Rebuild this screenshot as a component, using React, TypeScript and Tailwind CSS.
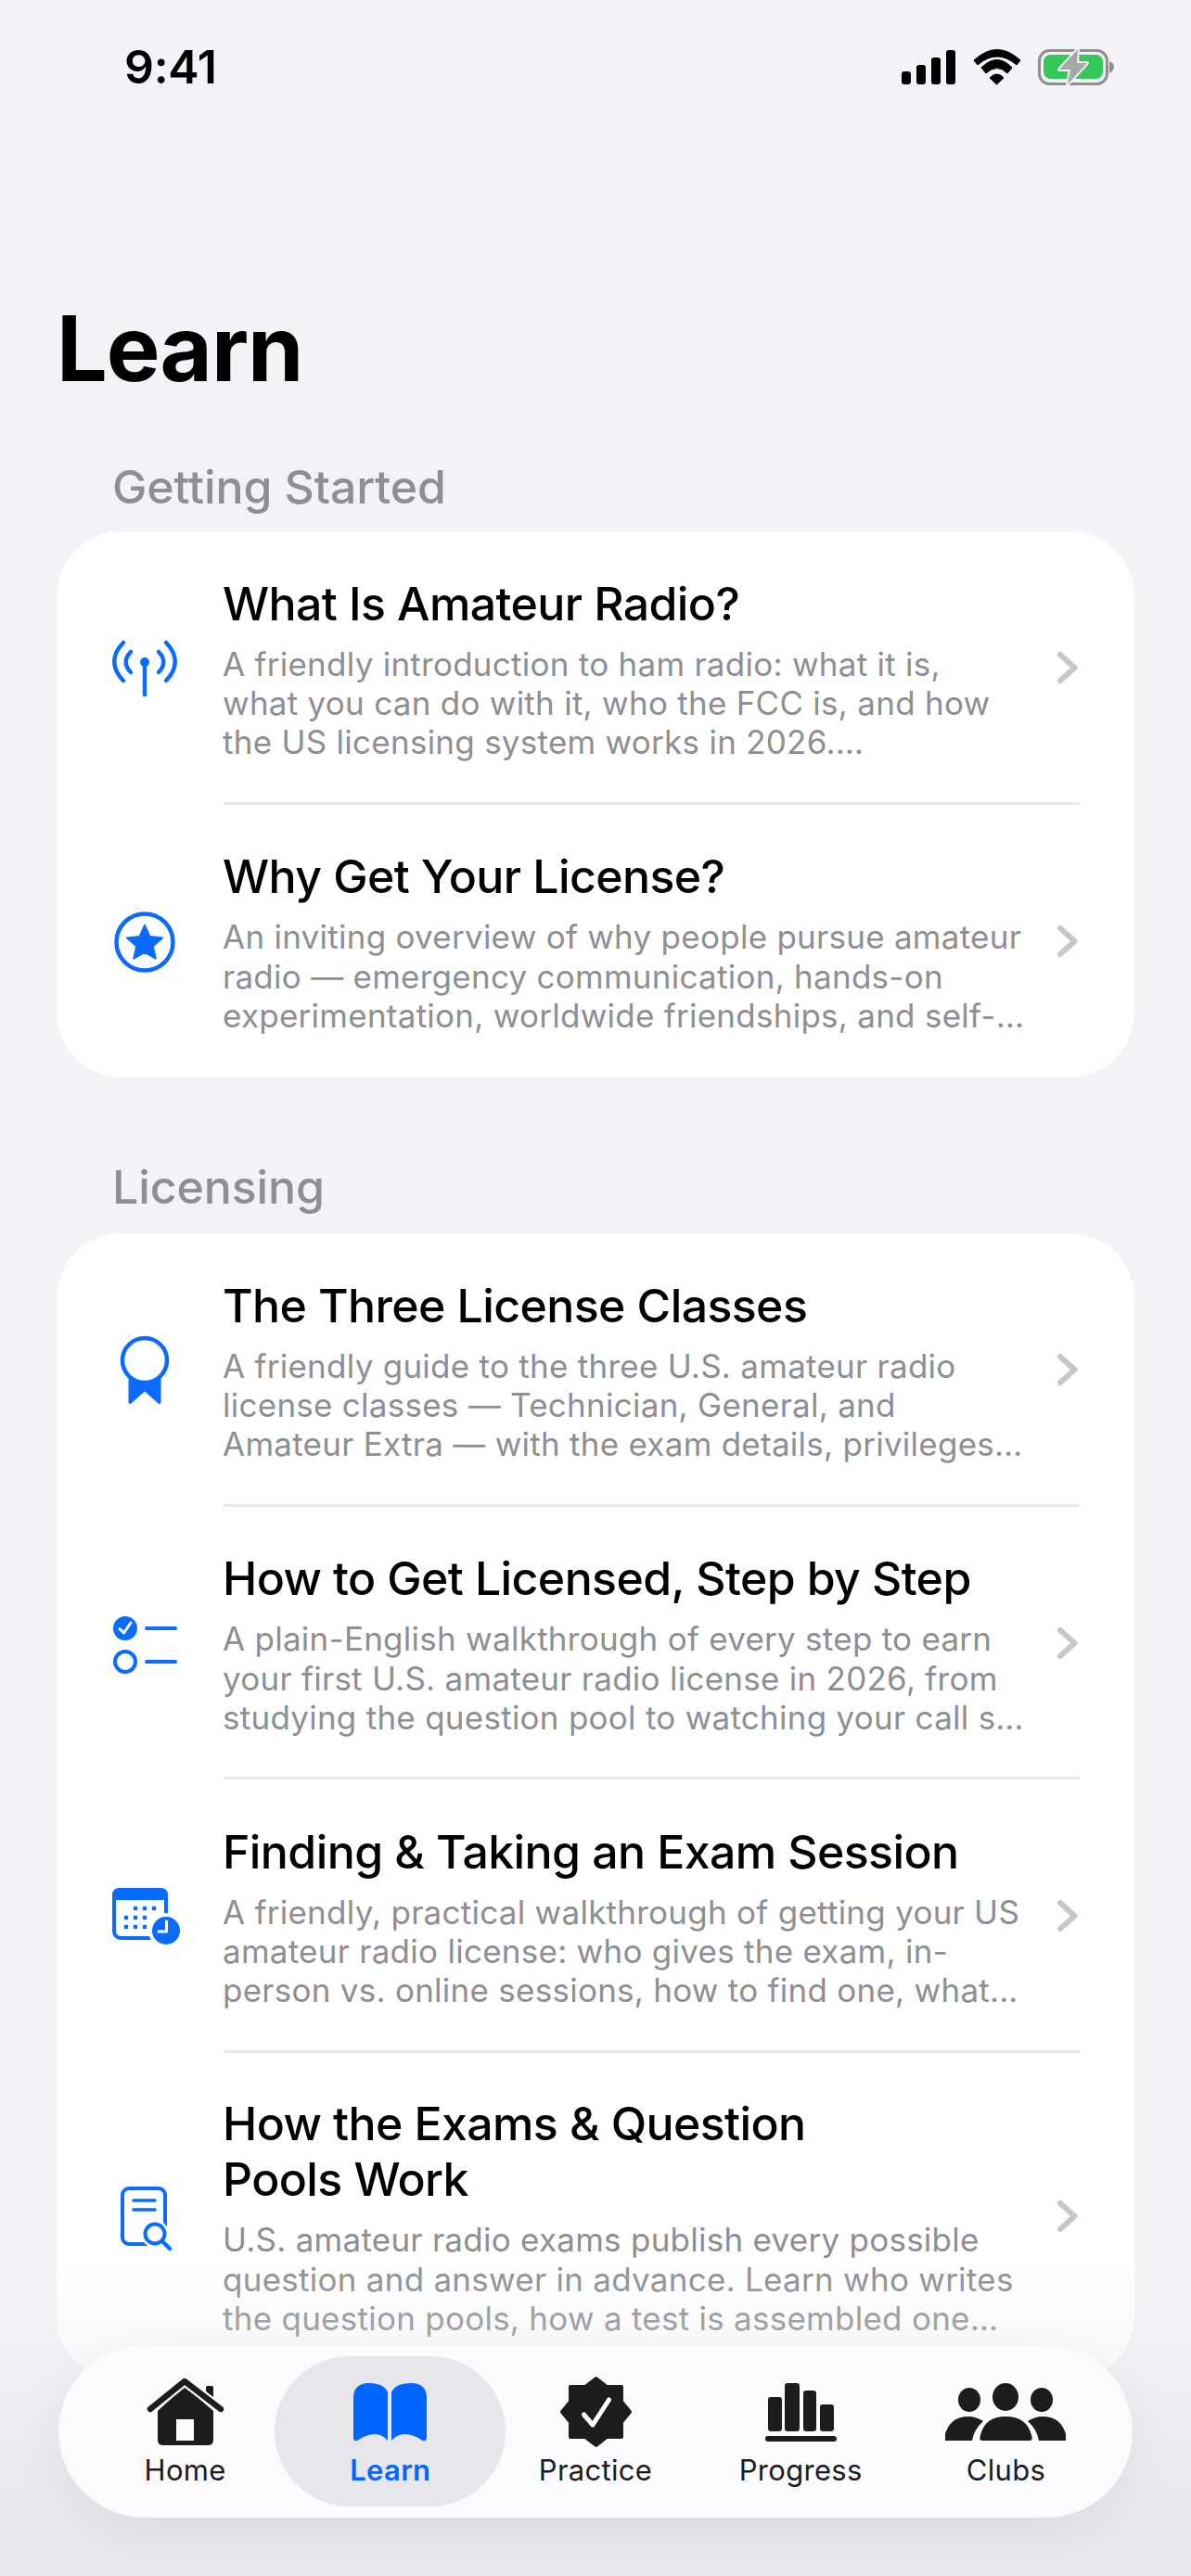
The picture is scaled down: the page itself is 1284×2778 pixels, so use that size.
import React from "react";

const BLUE = "#0a6cff";
const DARK = "#1c1c1e";

const Antenna = () => (
  <svg viewBox="116 680 80 80" className="w-20 h-20 shrink-0" fill="none" stroke={BLUE} strokeWidth="4.5" strokeLinecap="round">
    <path d="M133 693 C120 706 120 721 133 734" />
    <path d="M179 693 C192 706 192 721 179 734" />
    <path d="M141 703 C134 710 134 718 141 725" />
    <path d="M171 703 C178 710 178 718 171 725" />
    <path d="M156 714 V749" />
    <circle cx="156" cy="714" r="5" fill={BLUE} stroke="none" />
  </svg>
);

const StarCircle = () => (
  <svg viewBox="116 974 80 80" className="w-20 h-20 shrink-0">
    <circle cx="156" cy="1015" r="30.5" fill="none" stroke={BLUE} strokeWidth="4.5" />
    <path d="M156 997 L161.4 1009 L175 1010.4 L164.8 1019.4 L167.8 1032.6 L156 1025.8 L144.2 1032.6 L147.2 1019.4 L137 1010.4 L150.6 1009 Z" fill={BLUE} stroke={BLUE} strokeWidth="2" strokeLinejoin="round" />
  </svg>
);

const Ribbon = () => (
  <svg viewBox="116 1436 80 80" className="w-20 h-20 shrink-0">
    <path d="M138.5 1482 L173.5 1482 L173.5 1511 Q173.5 1514 170.5 1512.5 L156 1499.5 L141.5 1512.5 Q138.5 1514 138.5 1511 Z" fill={BLUE} />
    <circle cx="156" cy="1466" r="24" fill="#fff" stroke={BLUE} strokeWidth="4.5" />
  </svg>
);

const Checklist = () => (
  <svg viewBox="116 1730 80 80" className="w-20 h-20 shrink-0" fill="none" strokeLinecap="round">
    <circle cx="135" cy="1754" r="13" fill={BLUE} />
    <path d="M129 1754.5 L133.5 1759 L141 1748" stroke="#fff" strokeWidth="3" strokeLinejoin="round" />
    <circle cx="135" cy="1790" r="11" stroke={BLUE} strokeWidth="4" />
    <path d="M158 1754 H189 M158 1790 H189" stroke={BLUE} strokeWidth="4" />
  </svg>
);

const CalendarClock = () => (
  <svg viewBox="116 2025 80 80" className="w-20 h-20 shrink-0">
    <rect x="123" y="2037" width="56" height="52" rx="7" fill="none" stroke={BLUE} strokeWidth="4" />
    <path d="M121 2048 V2043 Q121 2035 129 2035 H173 Q181 2035 181 2043 V2048 Z" fill={BLUE} />
    {[
      [146, 2057], [156, 2057], [166, 2057],
      [136, 2067], [146, 2067], [156, 2067],
      [136, 2077], [146, 2077], [156, 2077],
    ].map(([x, y]) => (
      <rect key={`${x}-${y}`} x={x - 2.2} y={y - 2.2} width="4.4" height="4.4" rx="1.2" fill={BLUE} />
    ))}
    <circle cx="179" cy="2081" r="19" fill="#fff" />
    <circle cx="179" cy="2081" r="15" fill={BLUE} />
    <path d="M179.5 2071 V2082 H171" fill="none" stroke="#fff" strokeWidth="3" strokeLinecap="round" strokeLinejoin="round" />
  </svg>
);

const DocSearch = () => (
  <svg viewBox="116 2348 80 80" className="w-20 h-20 shrink-0" fill="none" stroke={BLUE} strokeLinecap="round">
    <rect x="132" y="2358" width="46" height="60" rx="7" strokeWidth="4" />
    <path d="M144 2371 H167 M144 2381 H167" strokeWidth="3.5" />
    <circle cx="167" cy="2407" r="15" fill="#fff" stroke="none" />
    <circle cx="167" cy="2407" r="10.5" strokeWidth="4" fill="#fff" />
    <path d="M175 2415 L183 2423" strokeWidth="4.5" />
  </svg>
);

const Chevron = () => (
  <svg viewBox="0 0 24 36" className="w-6 h-9 shrink-0" fill="none" stroke="#c7c7c9" strokeWidth="6" strokeLinecap="round" strokeLinejoin="round">
    <path d="M3 4 L18.5 18 L3 32" />
  </svg>
);

type Item = { icon: React.ReactNode; title: string[]; lines: string[]; last?: boolean };

const Row = ({ item, tall }: { item: Item; tall?: boolean }) => (
  <div className={`flex items-center pl-[55px] ${tall ? "h-[353px]" : "h-[294.5px]"}`}>
    {item.icon}
    <div className="ml-[44px] w-[924px] h-full flex items-center relative">
      <div className="flex-1 min-w-0 pt-[2px]">
        <div className="text-[50px] leading-[60px] font-[550] tracking-[-0.6px] text-black whitespace-nowrap">
          {item.title.map((t) => (
            <div key={t}>{t}</div>
          ))}
        </div>
        <div className="mt-[14px] text-[35px] leading-[42.4px] tracking-[0.26px] text-[#8e8e93] whitespace-nowrap">
          {item.lines.map((t) => (
            <div key={t}>{t}</div>
          ))}
        </div>
      </div>
      <Chevron />
      {!item.last && <div className="absolute left-[1px] right-0 bottom-0 h-[3px] bg-[#e8e8ea]" />}
    </div>
  </div>
);

const gettingStarted: Item[] = [
  {
    icon: <Antenna />,
    title: ["What Is Amateur Radio?"],
    lines: [
      "A friendly introduction to ham radio: what it is,",
      "what you can do with it, who the FCC is, and how",
      "the US licensing system works in 2026.…",
    ],
  },
  {
    icon: <StarCircle />,
    title: ["Why Get Your License?"],
    lines: [
      "An inviting overview of why people pursue amateur",
      "radio — emergency communication, hands-on",
      "experimentation, worldwide friendships, and self-…",
    ],
    last: true,
  },
];

const licensing: Item[] = [
  {
    icon: <Ribbon />,
    title: ["The Three License Classes"],
    lines: [
      "A friendly guide to the three U.S. amateur radio",
      "license classes — Technician, General, and",
      "Amateur Extra — with the exam details, privileges…",
    ],
  },
  {
    icon: <Checklist />,
    title: ["How to Get Licensed, Step by Step"],
    lines: [
      "A plain-English walkthrough of every step to earn",
      "your first U.S. amateur radio license in 2026, from",
      "studying the question pool to watching your call s…",
    ],
  },
  {
    icon: <CalendarClock />,
    title: ["Finding & Taking an Exam Session"],
    lines: [
      "A friendly, practical walkthrough of getting your US",
      "amateur radio license: who gives the exam, in-",
      "person vs. online sessions, how to find one, what…",
    ],
  },
  {
    icon: <DocSearch />,
    title: ["How the Exams & Question", "Pools Work"],
    lines: [
      "U.S. amateur radio exams publish every possible",
      "question and answer in advance. Learn who writes",
      "the question pools, how a test is assembled one…",
    ],
    last: true,
  },
];

const SectionLabel = ({ children }: { children: React.ReactNode }) => (
  <div className="pl-[121px] text-[50px] leading-[60px] font-[550] text-[#8e8e93] tracking-[-0.1px]">{children}</div>
);

const tabs = [
  {
    label: "Home",
    vb: "155 2562 90 80",
    svg: (
      <>
        <path d="M170 2600 L199 2573 L230 2600 V2631 Q230 2637 224 2637 H176 Q170 2637 170 2631 Z" fill={DARK} />
        <rect x="190" y="2609" width="19" height="23" fill="#fbfbfe" />
        <rect x="222" y="2573" width="8" height="20" rx="1.5" fill={DARK} />
        <path d="M162 2598 L199 2568 L238 2598" fill="none" stroke="#fbfbfe" strokeWidth="11" strokeLinecap="round" strokeLinejoin="round" />
        <path d="M162 2598 L199 2568 L238 2598" fill="none" stroke={DARK} strokeWidth="6.5" strokeLinecap="round" strokeLinejoin="round" />
      </>
    ),
  },
  {
    label: "Learn",
    vb: "375 2562 90 80",
    svg: (
      <>
        <path d="M380 2586 Q380 2570 397 2570 Q413 2570 417 2580 V2632 Q405 2618 384 2632 Q380 2633 380 2628 Z" fill="#0066ff" />
        <path d="M459 2586 Q459 2570 442 2570 Q425 2570 421 2580 V2632 Q433 2618 455 2632 Q459 2633 459 2628 Z" fill="#0066ff" />
      </>
    ),
  },
  {
    label: "Practice",
    vb: "597 2562 90 80",
    svg: (
      <>
        <path
          d="M642.7 2565 L654 2574 H670 V2590 L679 2601 L670 2612 V2628 H654 L642.7 2637 L631 2628 H615 V2612 L606 2601 L615 2590 V2574 H631 Z"
          fill={DARK}
          stroke={DARK}
          strokeWidth="4"
          strokeLinejoin="round"
        />
        <path d="M629.5 2604 L639 2615 L656.5 2588" fill="none" stroke="#fff" strokeWidth="5" strokeLinecap="round" strokeLinejoin="round" />
      </>
    ),
  },
  {
    label: "Progress",
    vb: "819 2562 90 80",
    svg: (
      <g fill={DARK}>
        <rect x="829" y="2585" width="15" height="37" rx="3" />
        <rect x="847" y="2570" width="16" height="52" rx="3" />
        <rect x="867" y="2578" width="14" height="44" rx="3" />
        <rect x="885" y="2593" width="15" height="29" rx="3" />
        <rect x="826" y="2627" width="77" height="6" rx="3" />
      </g>
    ),
  },
  {
    label: "Clubs",
    vb: "1019 2562 130 80",
    svg: (
      <g fill={DARK}>
        <ellipse cx="1084" cy="2585" rx="14" ry="15" />
        <ellipse cx="1045" cy="2588" rx="12" ry="13" />
        <ellipse cx="1123" cy="2588" rx="12" ry="13" />
        <path d="M1020 2632 Q1016 2632 1020 2622 Q1026 2606 1044 2606 Q1052 2606 1060 2611 Q1050 2620 1048 2632 Z" />
        <path d="M1148 2632 Q1152 2632 1148 2622 Q1142 2606 1124 2606 Q1116 2606 1108 2611 Q1118 2620 1120 2632 Z" />
        <path d="M1059 2632 Q1055 2632 1057 2626 Q1062 2606 1084 2606 Q1107 2606 1112 2626 Q1114 2632 1110 2632 Z" />
      </g>
    ),
  },
];

export default function App() {
  return (
    <div className="relative w-[1284px] h-[2778px] overflow-hidden bg-[#f2f2f7] font-['Inter',sans-serif]">
      <div className="flex items-center justify-between h-[144px] pl-[134px] pr-[80px]">
        <div className="text-[50px] font-semibold leading-none text-black tracking-[-0.3px]">9:41</div>
        <svg viewBox="970 50 235 44" className="w-[235px] h-[44px]">
          <rect x="973" y="77" width="10" height="14" rx="3" fill="#000" />
          <rect x="989" y="70" width="10" height="21" rx="3" fill="#000" />
          <rect x="1005" y="62" width="10" height="29" rx="3" fill="#000" />
          <rect x="1021" y="54" width="10" height="37" rx="3" fill="#000" />
          <path d="M1051 65 Q1076 42 1101 65 L1097 70 Q1076 52 1055 70 Z" fill="#000" stroke="#000" strokeWidth="1" strokeLinejoin="round" />
          <path d="M1059 73 Q1076 56 1092 73 L1087 79 Q1076 68 1064 79 Z" fill="#000" stroke="#000" strokeWidth="1" strokeLinejoin="round" />
          <path d="M1068 84 Q1076 76 1083 84 L1075.5 91 Z" fill="#000" stroke="#000" strokeWidth="1" strokeLinejoin="round" />
          <rect x="1121.5" y="54.5" width="73" height="36" rx="11" fill="none" stroke="#8e8e8e" strokeWidth="3" />
          <rect x="1126" y="59" width="64" height="26" rx="7.5" fill="#34c759" />
          <path d="M1197 66 Q1202 68 1202 72 Q1202 76 1197 79 Z" fill="#8e8e8e" />
          <path d="M1163 53 L1143 75 L1155 75 L1152 91 L1173 68 L1162 68 Z" fill="#a8a8a8" stroke="#f2f2f7" strokeWidth="4" strokeLinejoin="round" paintOrder="stroke" />
        </svg>
      </div>

      <h1 className="pl-[61px] mt-[182px] text-[97px] leading-[100px] font-bold text-black tracking-[-1px]">Learn</h1>

      <div className="mt-[69px]">
        <SectionLabel>Getting Started</SectionLabel>
      </div>
      <div className="mx-[61px] mt-[18px] bg-white rounded-[70px]">
        {gettingStarted.map((it) => (
          <Row key={it.title[0]} item={it} />
        ))}
      </div>

      <div className="mt-[88px]">
        <SectionLabel>Licensing</SectionLabel>
      </div>
      <div className="mx-[61px] mt-[20px] bg-white rounded-[70px]">
        {licensing.map((it) => (
          <Row key={it.title[0]} item={it} tall={it.last} />
        ))}
      </div>

      <div className="absolute left-0 right-0 bottom-0 h-[340px] bg-gradient-to-b from-[#ececf000] via-[#ececf050] via-[30%] to-[#e9e9edff] to-[85%] pointer-events-none" />

      <div className="absolute left-[63px] top-[2529px] w-[1158px] h-[186px] rounded-[93px] bg-[#fbfbfe] shadow-[0_16px_60px_rgba(0,0,0,0.06)] flex px-[26px]">
        {tabs.map((t) => {
          const active = t.label === "Learn";
          const w = t.label === "Clubs" ? "w-[130px]" : "w-[90px]";
          return (
            <div key={t.label} className="relative flex-1 flex flex-col items-center pt-[33px]">
              {active && <div className="absolute left-[-14px] right-[-14px] top-[12px] bottom-[12px] rounded-[81px] bg-[#e6e6eb]" />}
              <svg viewBox={t.vb} className={`relative ${w} h-20 shrink-0`}>
                {t.svg}
              </svg>
              <div className={`relative mt-[4px] text-[31px] leading-9 tracking-[0.3px] ${active ? "font-semibold text-[#0066ff]" : "font-normal text-[#1c1c1e]"}`}>{t.label}</div>
            </div>
          );
        })}
      </div>
    </div>
  );
}
